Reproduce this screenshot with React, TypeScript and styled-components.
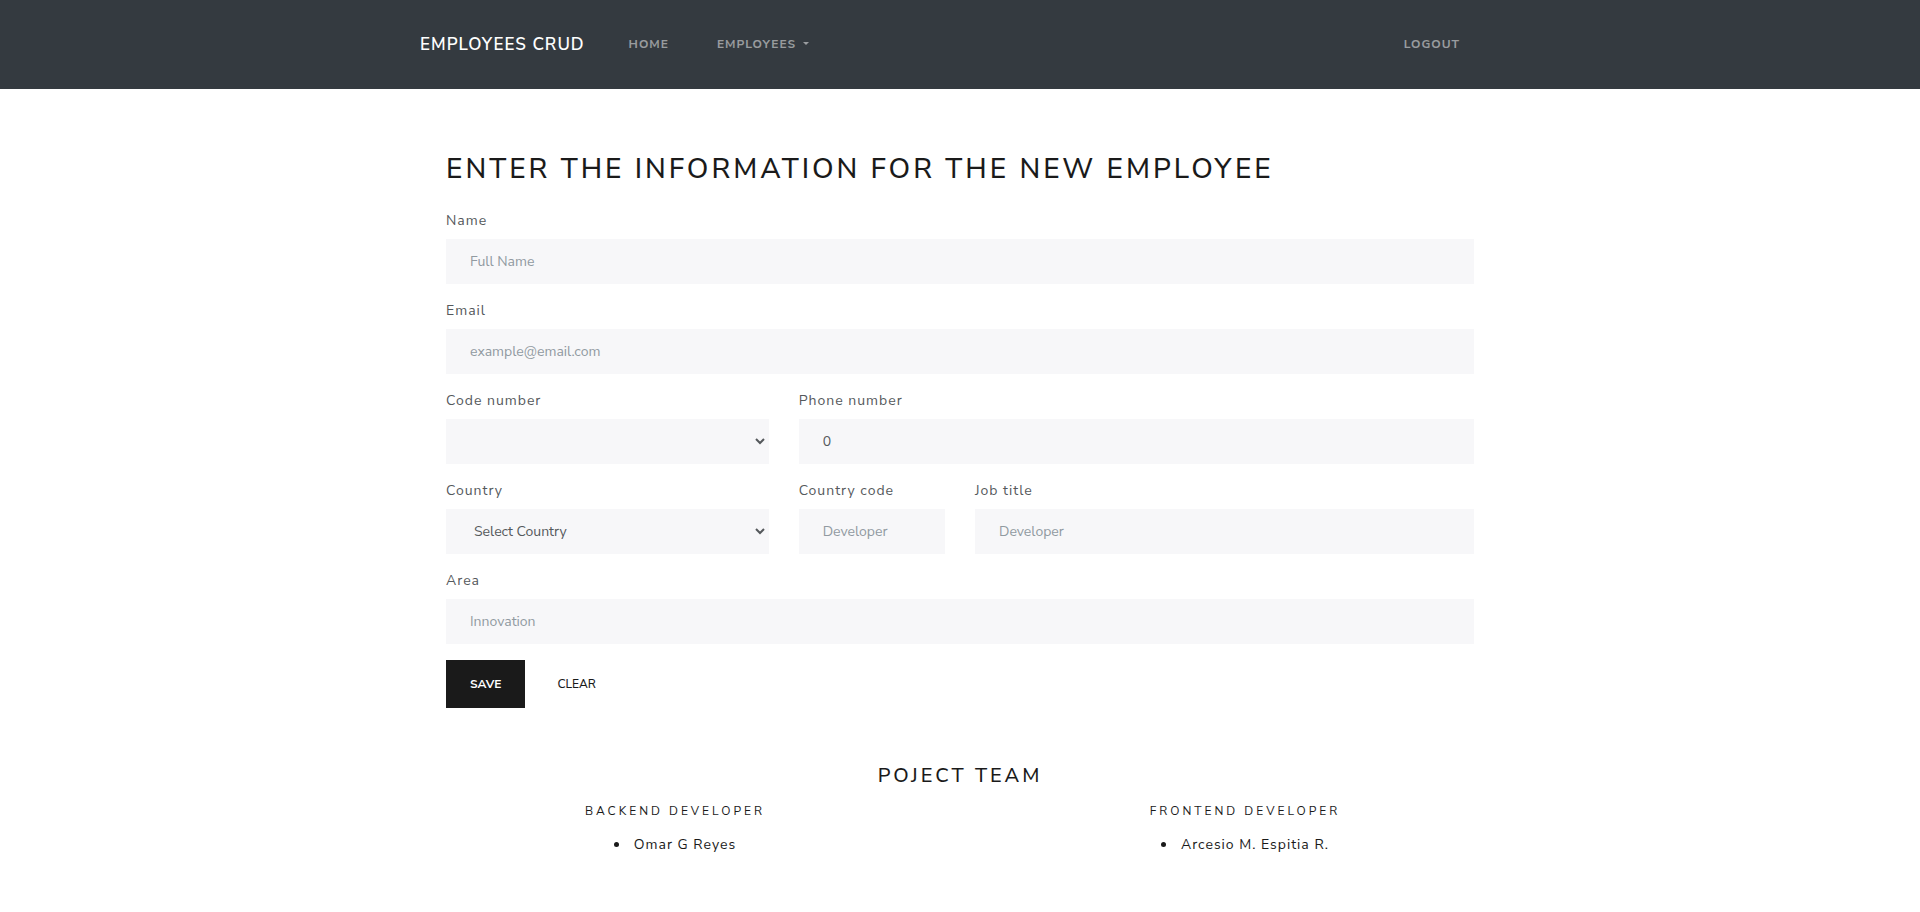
import React, { useId } from "react";
import styled, { createGlobalStyle } from "styled-components";

const GlobalStyle = createGlobalStyle`
  *, *::before, *::after { box-sizing: border-box; }
  body {
    margin: 0;
    background: #fff;
    color: #1a1a1a;
    font-family: "Nunito Sans", Lato, "Open Sans", sans-serif;
    font-size: 14px;
    line-height: 21px;
    font-weight: 400;
    letter-spacing: 1px;
  }
`;

const Navbar = styled.nav`
  background: #343a40;
  padding: 24px 16px;
`;

const NavInner = styled.div`
  display: flex;
  flex-wrap: wrap;
  align-items: center;
  max-width: 1140px;
  min-height: 41px;
  margin: 0 auto;
  padding: 0 30px;
`;

const Brand = styled.a`
  margin-right: 44px;
  color: #fff;
  font-size: 17px;
  line-height: 27px;
  font-weight: 600;
  text-decoration: none;
  text-transform: uppercase;
`;

const NavList = styled.ul<{ $end?: boolean }>`
  display: flex;
  gap: 48px;
  margin: 0 ${(p) => (p.$end ? "40px 0 auto" : "0")};
  padding: 0;
  list-style: none;
`;

const NavLink = styled.a`
  display: flex;
  align-items: center;
  padding: 0 0 2px;
  border: 0;
  background: none;
  color: rgba(255, 255, 255, 0.5);
  font-family: inherit;
  font-size: 12px;
  line-height: 18px;
  font-weight: 700;
  letter-spacing: 1px;
  text-decoration: none;
  text-transform: uppercase;
  cursor: pointer;
`;

const Caret = styled.span`
  margin-left: 7px;
  border-top: 3px solid;
  border-right: 3px solid transparent;
  border-left: 3px solid transparent;
`;

const Main = styled.main`
  max-width: 1028px;
  margin: 0 auto;
  padding-top: 63px;
`;

const Title = styled.h1`
  margin: 0 0 24px;
  font-size: 28px;
  line-height: 34px;
  font-weight: 500;
  letter-spacing: 3px;
  text-transform: uppercase;
`;

const FormGrid = styled.form`
  display: grid;
  grid-template-columns: repeat(12, minmax(0, 1fr));
  gap: 16px 30px;
`;

const FieldBox = styled.div<{ $span: number }>`
  grid-column: span ${(p) => p.$span};
  display: flex;
  flex-direction: column;
  gap: 8px;
`;

const Label = styled.label`
  color: #55595c;
`;

const Input = styled.input`
  width: 100%;
  height: 45px;
  padding: 12px 24px;
  border: 0;
  border-radius: 0;
  background: #f7f7f9;
  color: #55595c;
  font-family: inherit;
  font-size: 14px;
  line-height: 21px;
  font-weight: 400;

  &::placeholder {
    color: #919aa1;
    opacity: 1;
  }
`;

const Select = styled(Input)`
  padding: 11px 23px;
  border: 1px solid #f7f7f9;
`;

const Actions = styled.div`
  grid-column: 1 / -1;
  display: flex;
  gap: 8px;
`;

const Button = styled.button<{ $primary?: boolean }>`
  height: 48px;
  padding: 0 24px;
  border: 0;
  background: ${(p) => (p.$primary ? "#1a1a1a" : "transparent")};
  color: ${(p) => (p.$primary ? "#fff" : "#1a1a1a")};
  font-family: inherit;
  font-size: 12px;
  line-height: 18px;
  font-weight: ${(p) => (p.$primary ? 700 : 500)};
  text-transform: uppercase;
  cursor: pointer;
`;

const Footer = styled.footer`
  max-width: 1140px;
  margin: 0 auto;
  padding: 56px 0 16px;
  text-align: center;
`;

const TeamTitle = styled.h2`
  margin: 0;
  font-size: 20px;
  line-height: 24px;
  font-weight: 500;
  letter-spacing: 3px;
  text-transform: uppercase;
`;

const TeamColumns = styled.div`
  display: grid;
  grid-template-columns: 1fr 1fr;
  margin-top: 15px;
`;

const Role = styled.h3`
  margin: 0;
  font-size: 12px;
  line-height: 16px;
  font-weight: 400;
  letter-spacing: 3px;
  text-transform: uppercase;
`;

const Members = styled.ul`
  margin: 15px 0 0;
  padding: 0;
  list-style: disc inside;
`;

function TextField(props: {
  label: string;
  span: number;
  type?: string;
  placeholder?: string;
  defaultValue?: string;
}) {
  const id = useId();
  const { label, span, ...rest } = props;
  return (
    <FieldBox $span={span}>
      <Label htmlFor={id}>{label}</Label>
      <Input id={id} {...rest} />
    </FieldBox>
  );
}

function SelectField({ label, span, option }: { label: string; span: number; option: string }) {
  const id = useId();
  return (
    <FieldBox $span={span}>
      <Label htmlFor={id}>{label}</Label>
      <Select as="select" id={id}>
        <option>{option}</option>
      </Select>
    </FieldBox>
  );
}

const team = [
  { role: "Backend developer", members: ["Omar G Reyes"] },
  { role: "Frontend developer", members: ["Arcesio M. Espitia R."] },
];

export default function App() {
  return (
    <>
      <GlobalStyle />
      <Navbar>
        <NavInner>
          <Brand href="#">Employees CRUD</Brand>
          <NavList>
            <li>
              <NavLink href="#">Home</NavLink>
            </li>
            <li>
              <NavLink as="button" type="button" aria-haspopup="true">
                Employees
                <Caret />
              </NavLink>
            </li>
          </NavList>
          <NavList $end>
            <li>
              <NavLink href="#">Logout</NavLink>
            </li>
          </NavList>
        </NavInner>
      </Navbar>
      <Main>
        <Title>Enter the information for the new employee</Title>
        <FormGrid onSubmit={(e: React.FormEvent) => e.preventDefault()}>
          <TextField label="Name" span={12} placeholder="Full Name" />
          <TextField label="Email" span={12} type="email" placeholder="example@email.com" />
          <SelectField label="Code number" span={4} option="" />
          <TextField label="Phone number" span={8} defaultValue="0" />
          <SelectField label="Country" span={4} option="Select Country" />
          <TextField label="Country code" span={2} placeholder="Developer" />
          <TextField label="Job title" span={6} placeholder="Developer" />
          <TextField label="Area" span={12} placeholder="Innovation" />
          <Actions>
            <Button $primary type="submit">
              Save
            </Button>
            <Button type="reset">Clear</Button>
          </Actions>
        </FormGrid>
      </Main>
      <Footer>
        <TeamTitle>Poject team</TeamTitle>
        <TeamColumns>
          {team.map((group) => (
            <section key={group.role}>
              <Role>{group.role}</Role>
              <Members>
                {group.members.map((m) => (
                  <li key={m}>{m}</li>
                ))}
              </Members>
            </section>
          ))}
        </TeamColumns>
      </Footer>
    </>
  );
}
